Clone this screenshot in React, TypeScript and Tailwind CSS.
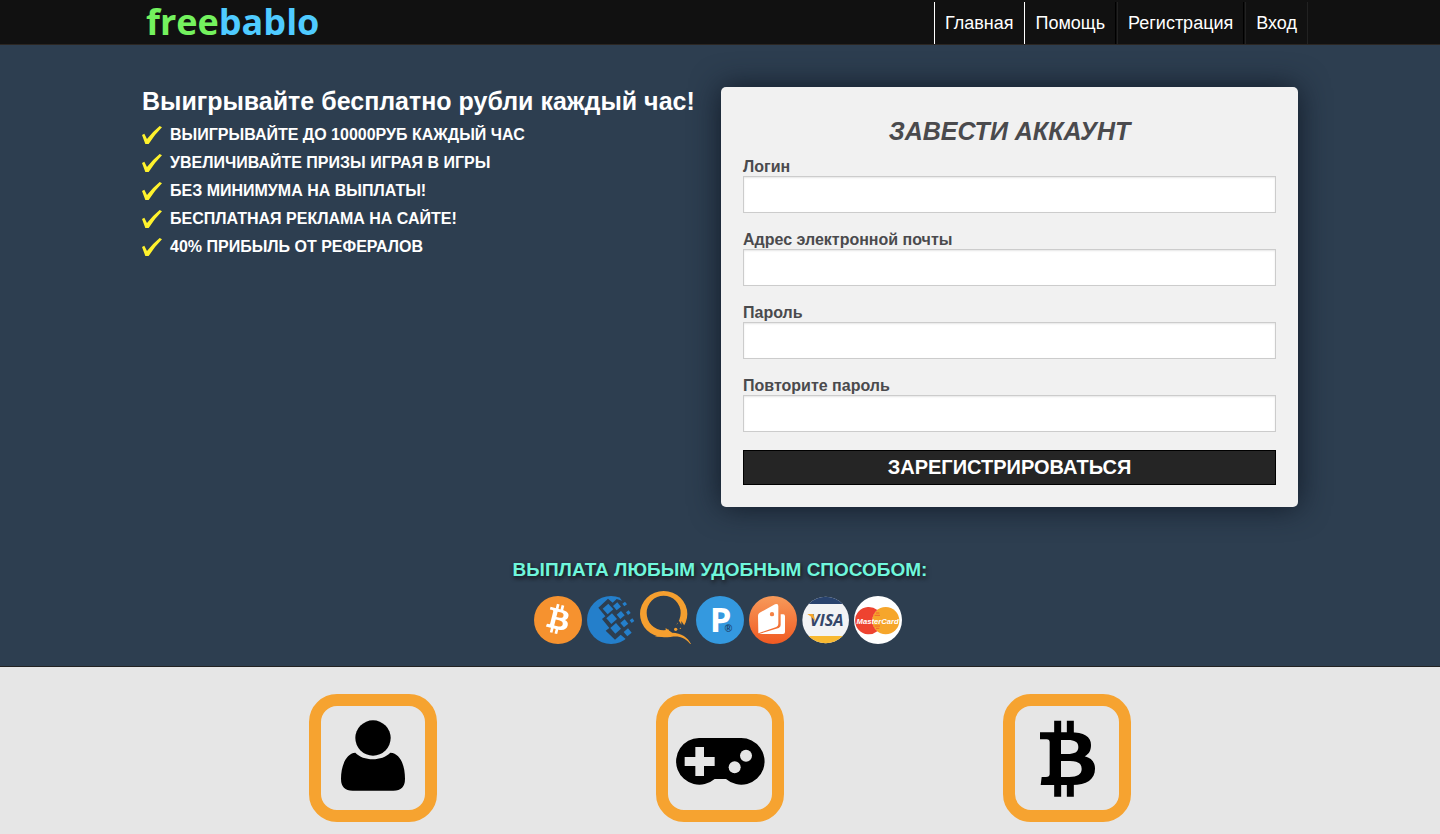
import React from "react";

const navItems = [
  { label: "Главная", className: "border-x border-white" },
  { label: "Помощь", className: "border-r border-black" },
  { label: "Регистрация", className: "border-l border-l-[#222] border-r border-r-black" },
  { label: "Вход", className: "border-x border-[#222]" },
];

const benefits = [
  "Выигрывайте до 10000руб каждый час",
  "Увеличивайте призы играя в игры",
  "Без минимума на выплаты!",
  "Бесплатная реклама на сайте!",
  "40% прибыль от рефералов",
];

const fields = [
  { id: "login", label: "Логин", type: "text" },
  { id: "email", label: "Адрес электронной почты", type: "email" },
  { id: "password", label: "Пароль", type: "password" },
  { id: "password-repeat", label: "Повторите пароль", type: "password" },
];

const CheckMark: React.FC = () => (
  <svg className="h-[18px] w-5 shrink-0" viewBox="0 0 60 54" aria-hidden="true">
    <path d="M0 27L7 23L15 39Q31 18 53 0L60 4Q36 28 20 54H10Z" fill="#fff22d" />
  </svg>
);

const BitcoinSign: React.FC = () => (
  <g>
    <path d="M203 182V222M241 182V222M203 366V410M241 366V410" fill="none" stroke="currentColor" strokeWidth="21" />
    <path
      fill="currentColor"
      fillRule="evenodd"
      d="M150 217H240C282 217 303 230 303 255C303 272 297 282 284 289C304 294 315 306 315 326C315 358 290 375 246 375H152L155 351H168Q179 351 179 342V247Q179 238 170 238H150ZM213 240V282H232C254 282 265 276 265 261C265 246 254 240 234 240ZM213 303V351H238C262 351 275 343 275 327C275 310 263 303 240 303Z"
    />
  </g>
);

const BitcoinLogo: React.FC = () => (
  <svg className="h-12 w-12 text-white" viewBox="0 0 144 144" role="img" aria-label="Bitcoin">
    <circle cx="72" cy="72" r="72" fill="#f6922f" />
    <g transform="translate(74 70) rotate(14) scale(.385) translate(-235 -296)">
      <BitcoinSign />
    </g>
  </svg>
);

const diamonds = [
  [264, 177, 16],
  [291, 169, 12],
  [314, 162, 7],
  [275, 206, 16],
  [302, 195, 12],
  [325, 188, 7],
  [313, 220, 12],
  [336, 212, 7],
  [287, 235, 16],
  [323, 247, 12],
];

const WebMoneyLogo: React.FC = () => (
  <svg className="h-12 w-12" viewBox="201 138 144 144" role="img" aria-label="WebMoney">
    <circle cx="273" cy="210" r="72" fill="#247fcb" />
    <path
      fill="#2d3e50"
      d="M306 152L290 147L278 158L264 146L235 173L256 199L246 207L268 234L257 242L285 269L302 254L318 268L330 290L352 282V130L308 134L300 144Z"
    />
    {diamonds.map(([x, y, r]) => (
      <path key={`${x}-${y}`} fill="#247fcb" d={`M${x - r} ${y - 1}L${x + 1} ${y - r}L${x + r} ${y + 1}L${x - 1} ${y + r}Z`} />
    ))}
  </svg>
);

const QiwiLogo: React.FC = () => (
  <svg className="h-[53px] w-[51px]" viewBox="360 123 153 159" role="img" aria-label="QIWI">
    <path
      fill="#f59f2f"
      fillRule="evenodd"
      d="M431 123A71 69 0 1 1 431 261A71 69 0 1 1 431 123ZM431 137A51 52 0 1 0 431 241A51 52 0 1 0 431 137Z"
    />
    <path fill="#2d3e50" d="M446 238L474 220L470 211L478 214L484 224V213L494 228L510 232L500 262L470 253L456 249L446 242Z" />
    <path fill="#f59f2f" d="M405 259C440 266 458 257 476 260C494 264 503 273 511 282H513C504 262 484 249 456 248L437 234V246L425 250Z" />
    <circle cx="467" cy="238" r="5" fill="#f59f2f" />
    <circle cx="481" cy="235" r="2" fill="#f59f2f" />
  </svg>
);

const PayeerLogo: React.FC = () => (
  <svg className="h-12 w-12" viewBox="16 48 144 144" role="img" aria-label="Payeer">
    <circle cx="88" cy="120" r="72" fill="#3499df" />
    <text x="57" y="156" fill="#fff" fontFamily="Open Sans, sans-serif" fontWeight="700" fontSize="104">
      P
      <tspan x="102" y="157" fill="#1d3f68" fontFamily="Liberation Sans, sans-serif" fontSize="30">
        ®
      </tspan>
    </text>
  </svg>
);

const WalletLogo: React.FC = () => (
  <svg className="h-12 w-12" viewBox="177 48 144 144" role="img" aria-label="Яндекс.Деньги">
    <defs>
      <linearGradient id="wallet" x1="0" y1="0" x2="0" y2="1">
        <stop offset="0" stopColor="#f79a5a" />
        <stop offset="1" stopColor="#f15a22" />
      </linearGradient>
    </defs>
    <circle cx="249" cy="120" r="72" fill="url(#wallet)" />
    <path
      fill="#fff"
      fillRule="evenodd"
      d="M209 98L255 73Q265 69 265 79V132Q265 138 259 141L205 160L204 107Q204 101 209 98ZM246 96A6 6 0 1 0 246 109A6 6 0 1 0 246 96Z"
    />
    <path fill="#fff" d="M272 103H280Q285 103 285 109V156Q285 162 279 162H207L266 144Q272 141 272 135Z" />
  </svg>
);

const VisaLogo: React.FC = () => (
  <svg className="h-12 w-[47px]" viewBox="334 48 141 144" role="img" aria-label="Visa">
    <defs>
      <clipPath id="visa">
        <circle cx="405" cy="120" r="70" />
      </clipPath>
    </defs>
    <g clipPath="url(#visa)">
      <rect x="333" y="48" width="144" height="144" fill="#f2f3f5" />
      <rect x="333" y="48" width="144" height="24" fill="#29436e" />
      <rect x="333" y="168" width="144" height="24" fill="#f8b932" />
    </g>
    <text x="408" y="138" fill="#34466a" fontFamily="Open Sans, sans-serif" fontWeight="700" fontStyle="italic" fontSize="49" textAnchor="middle">
      VISA
    </text>
    <path fill="#f6a62b" d="M350 102H368L374 124Q364 110 350 102Z" />
  </svg>
);

const MasterCardLogo: React.FC = () => (
  <svg className="h-12 w-12" viewBox="492 48 144 144" role="img" aria-label="MasterCard">
    <circle cx="564" cy="120" r="72" fill="#fff" />
    <circle cx="587" cy="122" r="41" fill="#f6a62b" />
    <path fill="#ee4330" d="M562 90A41 41 0 1 0 562 154A41 41 0 0 1 562 90Z" />
    <path stroke="#ee4330" strokeWidth="2" d="M558 99H568M554 106H570M554 138H570M558 145H568" />
    <text x="563" y="131" fill="#fff" fontFamily="Liberation Sans, sans-serif" fontWeight="700" fontStyle="italic" fontSize="23" textAnchor="middle">
      MasterCard
    </text>
  </svg>
);

const Tile: React.FC<{ children: React.ReactNode }> = ({ children }) => (
  <div className="h-32 w-32 justify-self-center overflow-hidden rounded-[28px] border-12 border-[#f6a330]">{children}</div>
);

const App: React.FC = () => (
  <div className="min-h-screen bg-[#e6e6e6] font-['Liberation_Sans',Arial,sans-serif]">
    <header className="border-b border-[#2b2622] bg-[#111]">
      <div className="mx-auto flex max-w-[1176px] items-end justify-between">
        <a href="#" className="pl-[14px] font-['Open_Sans',sans-serif] text-4xl leading-11 font-bold text-[#74f25e]">
          free<span className="text-[#4fcbff]">bablo</span>
        </a>
        <nav className="flex gap-px text-lg leading-[42px] text-white">
          {navItems.map((item) => (
            <a key={item.label} href="#" className={`px-[10px] ${item.className}`}>
              {item.label}
            </a>
          ))}
        </nav>
      </div>
    </header>

    <main>
      <section className="border-b border-[#222] bg-[#2d3e50] pt-[42px] pb-[22px]">
        <div className="mx-auto grid max-w-[1176px] grid-cols-2 gap-[2px] px-[10px]">
          <div className="text-white">
            <h1 className="mb-1.5 text-[25px] leading-7 font-bold whitespace-nowrap">Выигрывайте бесплатно рубли каждый час!</h1>
            <ul>
              {benefits.map((text) => (
                <li key={text} className="flex h-7 items-center gap-2 text-base font-bold uppercase">
                  <CheckMark />
                  {text}
                </li>
              ))}
            </ul>
          </div>

          <form className="rounded-[5px] bg-[#f1f1f1] p-[22px] text-[#4a4a4d] shadow-[0_0_30px_#111a27]">
            <h2 className="mb-[5px] text-center text-[25px] leading-11 font-bold uppercase italic">Завести аккаунт</h2>
            {fields.map((field) => (
              <div key={field.id} className="mb-[18px]">
                <label htmlFor={field.id} className="block text-base leading-[18px] font-bold">
                  {field.label}
                </label>
                <input
                  id={field.id}
                  type={field.type}
                  className="block h-[37px] w-full border border-[#ccc] bg-white px-2 shadow-[inset_0_1px_2px_rgba(0,0,0,0.1)]"
                />
              </div>
            ))}
            <button type="button" className="block h-[35px] w-full border border-black bg-[#252525] pb-0.5 text-xl font-bold text-white uppercase">
              Зарегистрироваться
            </button>
          </form>
        </div>

        <h3 className="mt-[49px] text-center text-[19px] leading-7 font-bold text-[#6ff7dc] uppercase text-shadow-[1px_2px_4px_#111]">
          Выплата любым удобным способом:
        </h3>
        <div className="mt-[7px] flex items-end justify-center gap-[5px] pr-1">
          <BitcoinLogo />
          <WebMoneyLogo />
          <QiwiLogo />
          <PayeerLogo />
          <WalletLogo />
          <VisaLogo />
          <MasterCardLogo />
        </div>
      </section>

      <section className="mx-auto grid max-w-[1041px] grid-cols-3 pt-[27px] pb-3">
        <Tile>
          <svg viewBox="63 138 312 312" aria-hidden="true">
            <circle cx="219" cy="234" r="53" />
            <path d="M166 278C190 304 246 304 271 278C304 280 315 322 315 356Q315 392 280 392H158Q123 392 123 356C123 322 136 280 166 278Z" />
          </svg>
        </Tile>
        <Tile>
          <svg viewBox="84 138 312 312" aria-hidden="true">
            <path d="M177 234H302A70 70 0 1 1 258 357H224A70 70 0 1 1 177 234Z" />
            <path d="M166 261H192V291H224V318H192V348H166V318H134V291H166Z" fill="#e6e6e6" />
            <circle cx="318" cy="287" r="18" fill="#e6e6e6" />
            <circle cx="284" cy="322" r="18" fill="#e6e6e6" />
          </svg>
        </Tile>
        <Tile>
          <svg viewBox="75 138 312 312" aria-hidden="true">
            <BitcoinSign />
          </svg>
        </Tile>
      </section>
    </main>
  </div>
);

export default App;
